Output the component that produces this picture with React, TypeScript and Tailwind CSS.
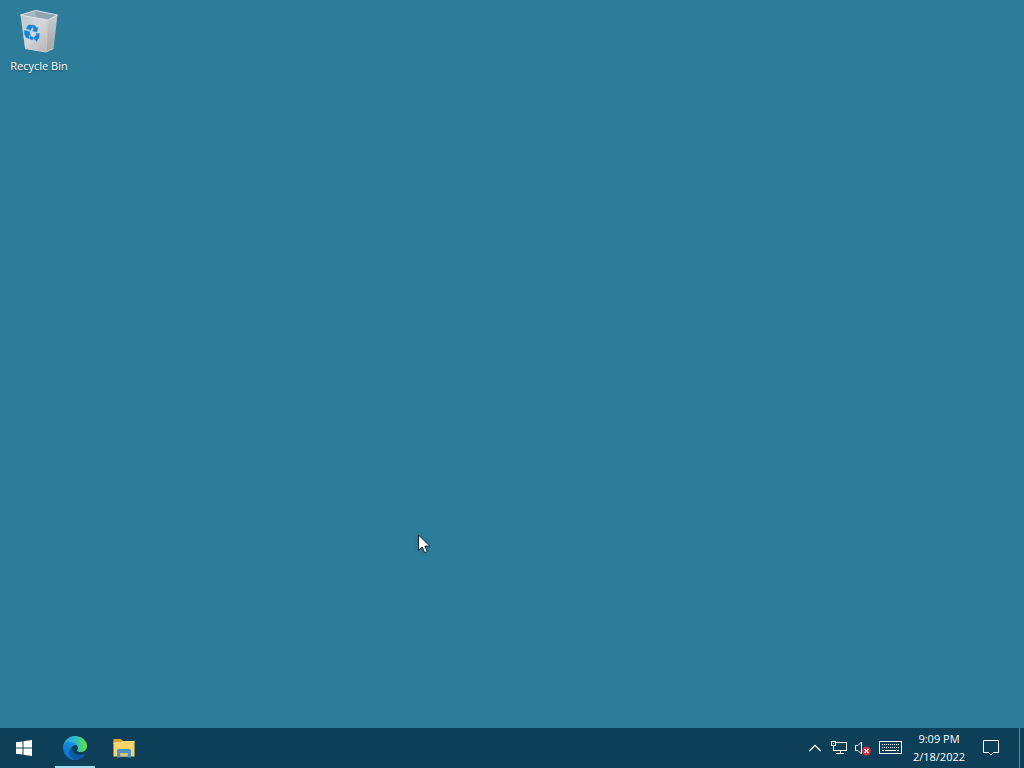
import React from "react";

function RecycleBinIcon() {
  return (
    <svg width="48" height="48" viewBox="0 0 48 48" aria-hidden="true">
      <defs>
        <linearGradient id="binFront" x1="0" y1="0" x2="1" y2="1">
          <stop offset="0" stopColor="#bccad2" />
          <stop offset="0.5" stopColor="#d3d7db" />
          <stop offset="1" stopColor="#b9b1b3" />
        </linearGradient>
        <linearGradient id="binSide" x1="0" y1="0" x2="0" y2="1">
          <stop offset="0" stopColor="#c3ccd2" />
          <stop offset="1" stopColor="#aaa4a6" />
        </linearGradient>
      </defs>
      <path d="M5.500 7 L33 11.500 L31 44 L10 40.500 Z" fill="url(#binFront)" />
      <path d="M33 11.500 L42.500 7 L38.500 40.500 L31 44 Z" fill="url(#binSide)" />
      <path d="M5.500 7 L20.500 2.500 L42.500 7 L33 12 Z" fill="#8fa3ad" />
      <path d="M9 7 L20.500 3.500 L21 9 Z" fill="#a9b8c0" />
      <path d="M20.500 3.500 L39.500 7 L33 10.500 L21 9 Z" fill="#91a4ae" />
      <path d="M5.500 7 L20.500 2.500 L42.500 7 L33 12 Z" fill="none" stroke="#dce5ea" strokeWidth="1" strokeLinejoin="round" />
      <path d="M33 12 L31 43.500" stroke="#dfe2e4" strokeWidth="0.6" />
      <path d="M10 40.500 L31 44 L38.500 40.500" fill="none" stroke="#d0cdce" strokeWidth="1" />
      <g fill="#1683d8" stroke="#1683d8" strokeWidth="0.4" transform="translate(-1.500 -2)">
        <path d="M12.500 22.500 L15 19 L19.500 19.200 L17 24.500 L14.800 23.200 Z" />
        <path d="M18.500 19.200 L21.500 19.500 L23.200 22 L24.800 21.300 L23.300 26 L18.800 24.800 L20.300 23.800 Z" />
        <path d="M11 24.500 L16 25.500 L17 29.500 L15.300 29 L15.500 32.500 L12.500 31.500 L10.800 27.500 Z" />
        <path d="M16.500 30.200 L19.300 31 L19.300 34 L16.300 33 Z" />
        <path d="M22.500 27.500 L25.800 27.500 L25.500 32 L23.500 34.200 L23.500 35.800 L19.700 32 L23.300 28.800 L23.500 30.500 Z" />
      </g>
    </svg>
  );
}

function WindowsIcon() {
  return (
    <svg width="16" height="16" viewBox="0 0 16 16" fill="#ffffff" aria-hidden="true">
      <path d="M0 2.300 L6.500 1.400 V7.500 H0 Z" />
      <path d="M7.500 1.200 L16 0 V7.500 H7.500 Z" />
      <path d="M0 8.500 H6.500 V14.600 L0 13.700 Z" />
      <path d="M7.500 8.500 H16 V16 L7.500 14.800 Z" />
    </svg>
  );
}

function EdgeIcon() {
  return (
    <svg width="24" height="24" viewBox="0 0 256 256" aria-hidden="true">
      <defs>
        <linearGradient id="edgeBase" x1="60" y1="177" x2="241" y2="177" gradientUnits="userSpaceOnUse">
          <stop offset="0" stopColor="#0c59a4" />
          <stop offset="1" stopColor="#135aa6" />
        </linearGradient>
        <linearGradient id="edgeLeft" x1="150" y1="90" x2="45" y2="230" gradientUnits="userSpaceOnUse">
          <stop offset="0" stopColor="#1b9de2" />
          <stop offset="0.5" stopColor="#147fd6" />
          <stop offset="1" stopColor="#0d72cc" />
        </linearGradient>
        <linearGradient id="edgeTop" x1="10" y1="90" x2="256" y2="90" gradientUnits="userSpaceOnUse">
          <stop offset="0" stopColor="#259fdf" />
          <stop offset="0.45" stopColor="#30b8d5" />
          <stop offset="0.75" stopColor="#45d17d" />
          <stop offset="1" stopColor="#66e34b" />
        </linearGradient>
      </defs>
      <path fill="url(#edgeBase)" d="M231 190.500c-3.400 1.800-6.900 3.400-10.500 4.700a101.900 101.900 0 0 1-35.900 6.500c-47.300 0-88.500-32.500-88.500-74.300 0-11.500 6.400-21.900 16.400-27.300-42.800 1.800-53.800 46.400-53.800 72.500 0 73.900 68.100 81.400 82.800 81.400 7.900 0 19.800-2.300 27-4.600l1.300-.4a128.300 128.300 0 0 0 66.600-52.800 4 4 0 0 0-5.400-5.700Z" />
      <path fill="url(#edgeLeft)" d="M105.700 241.400a79.200 79.200 0 0 1-22.700-21.300 80.700 80.700 0 0 1 29.500-120c3.200-1.500 8.500-4.100 15.600-4a32.400 32.400 0 0 1 25.700 13 31.900 31.900 0 0 1 6.300 18.700c0-.2 24.500-79.600-80-79.600-43.900 0-80 41.700-80 78.200a130.200 130.200 0 0 0 12.100 56 128 128 0 0 0 156.400 67.100 75.500 75.500 0 0 1-62.900-8.100Z" />
      <path fill="url(#edgeTop)" d="M152.300 148.900c-.8 1-3.300 2.500-3.300 5.700 0 2.600 1.700 5.100 4.700 7.200 14.400 10 41.500 8.700 41.600 8.700a59.600 59.600 0 0 0 30.300-8.300A61.400 61.400 0 0 0 256 109.100c.3-22.400-8-37.300-11.300-43.900C223.500 23.900 177.700 0 128 0A128 128 0 0 0 0 126.200c.5-36.500 36.800-66 80-66 3.500 0 23.500.3 42 10.100 16.300 8.600 24.900 18.900 30.800 29.200 6.200 10.700 7.300 24.100 7.300 29.500 0 5.300-2.700 13.300-7.800 19.900Z" />
    </svg>
  );
}

function FolderIcon() {
  return (
    <svg width="24" height="24" viewBox="0 0 24 24" aria-hidden="true">
      <path d="M1.500 3 H9 L11 5 H21.500 V8 H1.500 Z" fill="#e0a32a" />
      <path d="M1.500 6.500 H9 L11 5 H22.500 V20.500 H1.500 Z" fill="#fbd468" />
      <path d="M1.500 6.500 H9 L11 5 H22.500 V6 H11.500 L9.500 7.500 H1.500 Z" fill="#ffe394" />
      <path d="M5 21.500 V14.500 Q5 13 6.500 13 H17.500 Q19 13 19 14.500 V21.500 H15.500 V17 H8.500 V21.500 Z" fill="#4a93c8" />
      <path d="M8.500 17 H15.500 V20.500 H8.500 Z" fill="#d5c17b" />
    </svg>
  );
}

function ChevronIcon() {
  return (
    <svg width="16" height="16" viewBox="0 0 16 16" fill="none" stroke="#ffffff" strokeWidth="1.300" aria-hidden="true">
      <path d="M2.300 11 L8 5.300 L13.700 11" />
    </svg>
  );
}

function NetworkIcon() {
  return (
    <svg width="16" height="16" viewBox="0 0 16 16" fill="none" stroke="#ffffff" shapeRendering="crispEdges" aria-hidden="true">
      <path d="M5 2.500 H15.500 V10.500 H2.500 V6" />
      <path d="M0.500 1.500 H4.500 V5.500 H0.500 Z M2 3.500 H3" />
      <path d="M9.500 11 V13 M5 13.500 H13" />
    </svg>
  );
}

function VolumeIcon() {
  return (
    <svg width="16" height="16" viewBox="0 0 16 16" aria-hidden="true">
      <path d="M0.500 5.500 H3 L6.500 2 V14 L3 10.500 H0.500 Z" fill="none" stroke="#ffffff" />
      <circle cx="11.500" cy="11" r="4.500" fill="#c92f3c" />
      <path d="M9.500 9 L13.500 13 M13.500 9 L9.500 13" stroke="#ffffff" strokeWidth="1.200" />
    </svg>
  );
}

function KeyboardIcon() {
  return (
    <svg width="24" height="16" viewBox="0 0 24 16" fill="none" stroke="#ffffff" shapeRendering="crispEdges" aria-hidden="true">
      <path d="M0.500 1.500 H22.500 V13.500 H0.500 Z" />
      <path d="M3 4.500 H21 M3 7.500 H21" strokeDasharray="1 1" />
      <path d="M3 10.500 H5 M6 10.500 H17 M18 10.500 H20" />
    </svg>
  );
}

function NotificationIcon() {
  return (
    <svg width="16" height="16" viewBox="0 0 16 16" fill="none" stroke="#ffffff" aria-hidden="true">
      <path d="M0.500 0.500 H15.500 V12.500 H10.500 L8 15 L5.500 12.500 H0.500 Z" />
    </svg>
  );
}

function MousePointer() {
  return (
    <svg className="pointer-events-none absolute left-[418px] top-[534px] drop-shadow-sm" width="14" height="21" viewBox="0 0 14 21" aria-hidden="true">
      <path d="M0.500 1 V16.500 L4.200 13 L6.700 18.700 L9.300 17.600 L6.900 12.100 H11.700 Z" fill="#ffffff" stroke="#102530" />
    </svg>
  );
}

const taskButton = "relative flex h-10 w-12 items-center justify-center hover:bg-white/10";
const trayButton = "flex h-10 w-6 items-center justify-center hover:bg-white/10";

export default function App() {
  return (
    <div className="relative flex min-h-screen flex-col bg-[#2d7d9a] font-['Open_Sans','Noto_Sans',sans-serif] font-medium text-white">
      <main className="flex-1 px-px pt-2">
        <button type="button" className="flex w-19 flex-col items-center text-[11px] leading-4">
          <RecycleBinIcon />
          <span className="mt-0.5 whitespace-nowrap [text-shadow:0_1px_2px_rgba(0,0,0,0.5)]">Recycle Bin</span>
        </button>
      </main>

      <footer className="flex h-10 items-center justify-between bg-[#0d4058]">
        <nav aria-label="Taskbar" className="flex items-center gap-px">
          <button type="button" aria-label="Start" className={taskButton}>
            <WindowsIcon />
          </button>
          <button type="button" aria-label="Microsoft Edge" className={`${taskButton} ml-0.5`}>
            <EdgeIcon />
            <span className="absolute inset-x-1 bottom-0 h-0.5 bg-[#9fdcf2]" />
          </button>
          <button type="button" aria-label="File Explorer" className={taskButton}>
            <FolderIcon />
          </button>
        </nav>

        <div className="flex items-center">
          <button type="button" aria-label="Show hidden icons" className={trayButton}>
            <ChevronIcon />
          </button>
          <button type="button" aria-label="Network" className={trayButton}>
            <NetworkIcon />
          </button>
          <button type="button" aria-label="Volume" className={trayButton}>
            <VolumeIcon />
          </button>
          <button type="button" aria-label="Touch keyboard" className="mr-1 flex h-10 w-8 items-center justify-center hover:bg-white/10">
            <KeyboardIcon />
          </button>
          <button type="button" className="flex h-10 w-14 flex-col items-center justify-center whitespace-nowrap text-[11px] leading-[18px] hover:bg-white/10">
            <span>9:09 PM</span>
            <span>2/18/2022</span>
          </button>
          <button type="button" aria-label="Notifications" className="mr-1 flex h-10 w-12 items-center justify-center hover:bg-white/10">
            <NotificationIcon />
          </button>
          <button type="button" aria-label="Show desktop" className="h-10 w-[5px] border-l border-[#5f8797] hover:bg-white/10" />
        </div>
      </footer>

      <MousePointer />
    </div>
  );
}
